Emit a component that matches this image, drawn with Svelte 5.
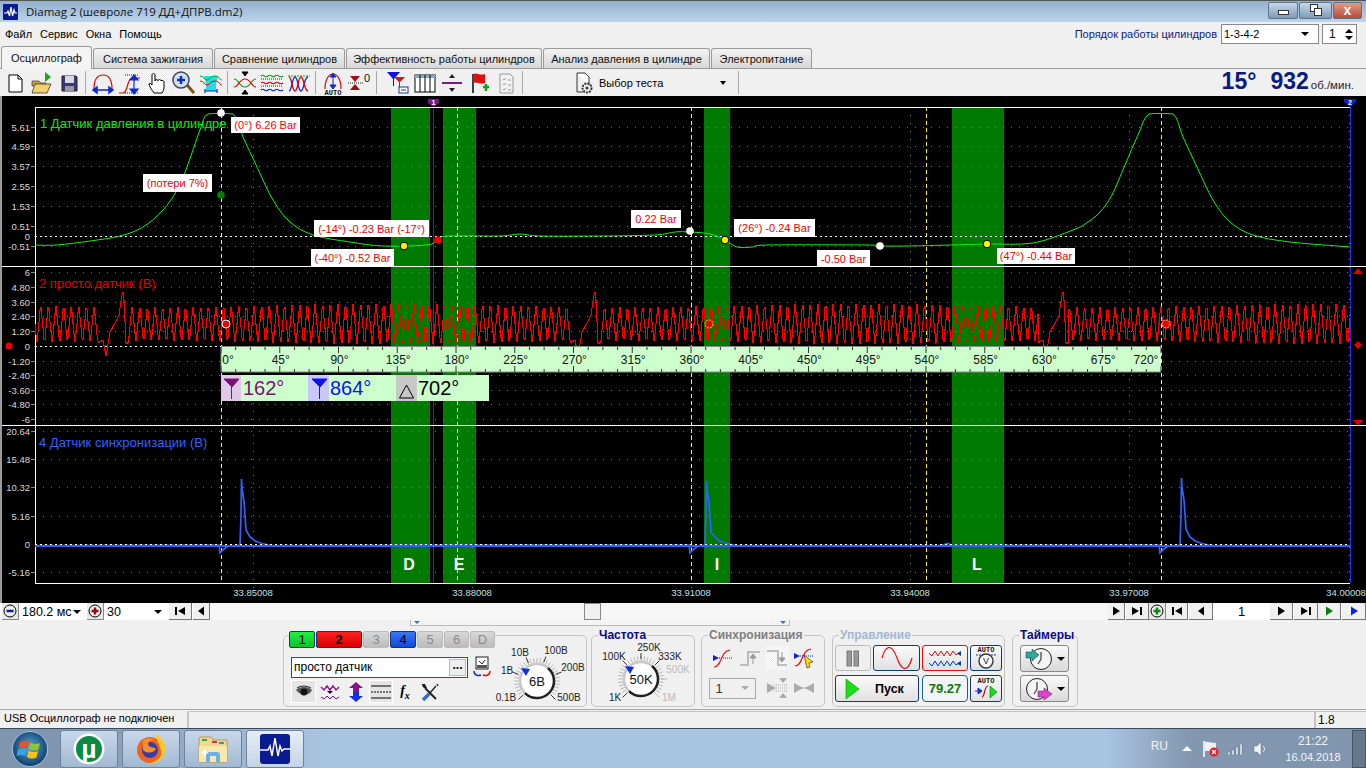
<script>
  const menus = ['Файл', 'Сервис', 'Окна', 'Помощь']
  const tabs = [
    ['Осциллограф', 91],
    ['Система зажигания', 120],
    ['Сравнение цилиндров', 131],
    ['Эффективность работы цилиндров', 196],
    ['Анализ давления в цилиндре', 167],
    ['Электропитание', 101]
  ]
  const channels = [
    ['1', 'green', 26], ['2', 'red', 46], ['3', 'off', 26], ['4', 'blue', 26],
    ['5', 'off', 26], ['6', 'off', 25], ['D', 'off', 25]
  ]

  // scope geometry
  const left = 35
  const right = 1350
  const bands = [[391, 39], [443, 33], [704, 26], [952, 52]]
  const cursors = [221, 457, 691, 926, 1161]
  const timeTicks = [[253, '33.85008', 253], [472, '33.88008', 472], [691, '33.91008', 691], [910, '33.94008', 910], [1129, '33.97008', 1129], [1349, '34.00008', 1346]]
  const axis = [
    [127, '5.61'], [146, '4.59'], [166, '3.57'], [186, '2.55'], [206, '1.53'], [226, '0.51'], [236, '0'], [246, '-0.51'],
    [272, '6'], [287, '4.80'], [302, '3.60'], [316, '2.40'], [331, '1.20'], [346, '0'], [361, '-1.20'], [375, '-2.40'], [390, '-3.60'], [404, '-4.80'], [419, '-6'],
    [431, '20.64'], [459, '15.48'], [487, '10.32'], [516, '5.16'], [544, '0'], [572, '-5.16']
  ]
  const gridRows = axis.filter((a) => a[1] !== '0').map((a) => a[0])
  const tags = [
    [231, 117, 69, 16, '(0°) 6.26 Bar'],
    [143, 174, 69, 18, '(потери 7%)'],
    [314, 220, 115, 17, '(-14°) -0.23 Bar (-17°)'],
    [311, 249, 83, 17, '(-40°) -0.52 Bar'],
    [631, 210, 50, 18, '0.22 Bar'],
    [734, 219, 81, 18, '(26°) -0.24 Bar'],
    [817, 250, 53, 17, '-0.50 Bar'],
    [997, 248, 78, 16, '(47°) -0.44 Bar']
  ]
  const dots = [
    [221, 113, '#fff'], [221, 195, '#0a7a0a'], [404, 246, '#ffee00'], [438, 240, '#f00000'],
    [690, 231, '#fff'], [725, 240, '#ffee00'], [880, 246, '#fff'], [987, 244, '#ffee00']
  ]

  const pressurePts = [
    [35, 245], [57, 245], [90, 241], [120, 236], [143, 227], [163, 210], [177, 190], [187, 167], [200, 130], [208, 114],
    [233, 114], [243, 137], [257, 167], [273, 200], [290, 222], [313, 235], [350, 242], [383, 246], [427, 245], [437, 240], [448, 236],
    [500, 236], [520, 234], [540, 236], [600, 236], [655, 235], [675, 232], [690, 232], [710, 234], [725, 240], [737, 247], [753, 247],
    [767, 245], [867, 245], [880, 246], [908, 246], [950, 245], [987, 244], [1033, 243], [1073, 230], [1088, 222], [1100, 212], [1112, 195],
    [1125, 165], [1138, 135], [1149, 114], [1173, 114], [1183, 137], [1197, 167], [1213, 200], [1230, 222], [1253, 235], [1290, 242], [1350, 247]
  ]

  // catmull-rom, so the curve doesn't show its knots
  function smooth(pts) {
    const out = []
    for (let i = 0; i < pts.length - 1; i++) {
      const a = pts[Math.max(i - 1, 0)]
      const b = pts[i]
      const c = pts[i + 1]
      const d = pts[Math.min(i + 2, pts.length - 1)]
      for (let s = 0; s < 4; s++) {
        const t = s / 4
        const f = (k) =>
          0.5 * (2 * b[k] + (c[k] - a[k]) * t + (2 * a[k] - 5 * b[k] + 4 * c[k] - d[k]) * t * t + (3 * b[k] - a[k] - 3 * c[k] + d[k]) * t * t * t)
        out.push(f(0).toFixed(1) + ',' + Math.max(113.5, f(1)).toFixed(1))
      }
    }
    out.push(pts[pts.length - 1].join(','))
    return out.join(' ')
  }
  const pressure = smooth(pressurePts)

  const bump = [[-25, 343], [-20, 340], [-17, 356], [-13, 332], [-8, 323], [-4, 315], [-1, 295], [0, 292], [1, 300], [3, 343], [6, 343]]

  function redY(x) {
    for (const p of [123, 595, 1063]) {
      const dx = x - p
      if (dx > -25 && dx < 6) {
        for (let i = 1; i < bump.length; i++) {
          if (dx <= bump[i][0]) {
            const t = (dx - bump[i - 1][0]) / (bump[i][0] - bump[i - 1][0])
            return bump[i - 1][1] + t * (bump[i][1] - bump[i - 1][1])
          }
        }
      }
    }
    const th = (2 * Math.PI * (x - 40.7)) / 7.62
    const amp = 16.5 - 1.6 * Math.sin((x - 35) / 75)
    return 324 - amp * (Math.cos(th) + 0.12 * Math.cos(3 * th))
  }
  let sensor = ''
  for (let x = left; x <= right; x += 1) sensor += x + ',' + redY(x).toFixed(1) + ' '

  function spike(dip, top, peak) {
    return [
      [dip - 1, 545], [dip, 553], [dip + 4, 549], [dip + 8, 546], [top - 1, 545], [top, 515], [top + 0.5, peak], [top + 1, peak + 9],
      [top + 2, peak + 16], [top + 3, peak + 22], [top + 4, peak + 36], [top + 5, peak + 51], [top + 9, 537], [top + 14, 541], [top + 21, 543.5], [top + 30, 545.5]
    ]
  }
  const sync = [[35, 545.5], ...spike(220, 241, 479), [940, 545.5], [948, 543.5], [952, 545.5], ...spike(690, 706, 481), ...spike(1160, 1181, 478), [1350, 545.5]]
    .sort((a, b) => a[0] - b[0])
    .map((p) => p.join(','))
    .join(' ')

  const scaleTicks = Array.from({ length: 65 }, (_, i) => ({ x: 221 + i * 14.6875, major: i % 4 === 0 }))
  const scaleLabels = Array.from({ length: 17 }, (_, i) => {
    let x = 221 + i * 58.75 + 1
    if (i === 0) x = 228
    if (i === 16) x = 1146
    return { x, text: i * 45 + '°' }
  })

  function polar(cx, cy, r, deg) {
    const a = ((deg - 90) * Math.PI) / 180
    return [cx + r * Math.cos(a), cy + r * Math.sin(a)]
  }
  function arc(cx, cy, r, from, to) {
    const a = polar(cx, cy, r, from)
    const b = polar(cx, cy, r, to)
    const big = to - from > 180 ? 1 : 0
    return `M${a[0]} ${a[1]}A${r} ${r} 0 ${big} 1 ${b[0]} ${b[1]}`
  }
  function tick(cx, cy, r1, r2, deg) {
    const a = polar(cx, cy, r1, deg)
    const b = polar(cx, cy, r2, deg)
    return `M${a[0]} ${a[1]}L${b[0]} ${b[1]}`
  }
  const fine = (step) => {
    const out = []
    for (let d = -135; d <= 135; d += step) out.push(d)
    return out
  }
</script>

{#snippet dial(cx, cy, value, step, r1, majors, labels)}
  {#each fine(step) as d}
    <path d={tick(cx, cy, r1 + 1, r1 + 6, d)} stroke="#b8b8b8" stroke-width="1" />
  {/each}
  <circle {cx} {cy} r={r1} fill="#fff" />
  <path d={arc(cx, cy, r1, -135, 40)} fill="none" stroke="#c8c8c8" stroke-width="2.5" />
  <path d={arc(cx, cy, r1, 40, 225)} fill="none" stroke="#202020" stroke-width="2.5" />
  {#each majors as m}
    <path d={tick(cx, cy, r1 + 3, r1 + 9, m[0])} stroke={m[1] ?? '#333'} stroke-width="1" />
  {/each}
  <polygon points="{cx - 16},{cy - 13} {cx - 7},{cy - 12} {cx - 11},{cy - 5}" fill="#1030e0" />
  <text x={cx} y={cy + 5} text-anchor="middle" class="dial-value">{value}</text>
  {#each labels as l}
    <text x={l[0]} y={l[1]} text-anchor="middle" class={l[3] ? 'dial-label dim' : 'dial-label'}>{l[2]}</text>
  {/each}
{/snippet}

{#snippet navBtn(width, kind, color, gap)}
  <button class="nav-btn" style="width:{width}px;margin-left:{gap ?? 0}px">
    <svg width="14" height="12" viewBox="0 0 14 12">
      {#if kind === 'first'}
        <path d="M2 2h2v8H2zM12 2v8L5 6z" fill={color} />
      {:else if kind === 'back'}
        <path d="M10 1.500v9L4 6z" fill={color} />
      {:else if kind === 'fwd'}
        <path d="M4 1.500v9l7-4.500z" fill={color} />
      {:else}
        <path d="M10 2h2v8h-2zM2 2v8l7-4z" fill={color} />
      {/if}
    </svg>
  </button>
{/snippet}

<div class="window">
  <header class="titlebar">
    <svg class="app-ico" width="15" height="16" viewBox="0 0 15 16">
      <rect width="15" height="16" rx="1" fill="#0a1a90" />
      <path d="M1 9h3l1-2 1.500 5L8 3l1.500 9L11 6l1 3h2" fill="none" stroke="#fff" stroke-width="1.200" />
    </svg>
    <span class="title">Diamag 2 (шевроле 719 ДД+ДПРВ.dm2)</span>
    <div class="win-btns">
      <span class="win-btn min"><i></i></span>
      <span class="win-btn restore"><i></i><b></b></span>
      <span class="win-btn close">x</span>
    </div>
  </header>

  <div class="menubar">
    {#each menus as m}<span>{m}</span>{/each}
    <span class="order-label">Порядок работы цилиндров</span>
    <div class="order-combo">1-3-4-2<em></em></div>
    <div class="order-spin">1<span class="spin"><em class="up"></em><em></em></span></div>
  </div>

  <nav class="tabs">
    {#each tabs as t, i}
      <span class="tab" class:active={i === 0} style="width:{t[1]}px">{t[0]}</span>
    {/each}
  </nav>

  <div class="toolbar">
    <button class="tb"><svg width="24" height="24" viewBox="0 0 24 24"><path d="M6 4h9l4 4v13H6z" fill="#fff" stroke="#000" /><path d="M15 4v4h4" fill="none" stroke="#000" /></svg></button>
    <button class="tb"><svg width="24" height="24" viewBox="0 0 24 24"><path d="M15 1l6 5-6 5z" fill="#1aa81a" /><path d="M2 10h7l2 2h5v3H2z" fill="#c8a030" stroke="#433" stroke-width=".7" /><path d="M2 22l3-9h16l-4 9z" fill="#f2cf70" stroke="#433" stroke-width=".8" /></svg></button>
    <button class="tb"><svg width="24" height="24" viewBox="0 0 24 24"><path d="M5 5h14l1 1v14H5z" fill="#3a3a70" stroke="#222" /><rect x="8" y="5" width="9" height="7" fill="#d8d8e8" /><rect x="8" y="15" width="9" height="5" fill="#9898a8" /></svg></button>
    <i class="sep"></i>
    <button class="tb"><svg width="26" height="24" viewBox="0 0 26 24"><path d="M4 18C4 8 8 4 13 4s9 4 9 14" fill="none" stroke="#e00000" stroke-width="1.200" /><path d="M3 19h20M7 16l-4 3 4 3zM19 16l4 3-4 3z" stroke="#0b2bd0" stroke-width="1.500" fill="#0b2bd0" /></svg></button>
    <button class="tb"><svg width="26" height="24" viewBox="0 0 26 24"><path d="M2 22h4c5 0 4-15 9-15h8" fill="none" stroke="#e00000" stroke-width="1.200" /><path d="M8 4h14M8 22h14" stroke="#222" stroke-dasharray="1 1" /><path d="M17 7v13M13 9l4-5 4 5zM13 18l4 5 4-5z" stroke="#0b2bd0" stroke-width="1.200" fill="#0b2bd0" /></svg></button>
    <button class="tb down"><svg width="24" height="24" viewBox="0 0 24 24"><path d="M9 22c-2-3-5-7-5-9 0-1 2-1 3 1V4c0-2 3-2 3 0v6c0-2 3-2 3 0 0-2 3-2 3 0 0-1 3-1 3 1v5c0 3-1 4-2 6z" fill="#fff" stroke="#000" /></svg></button>
    <button class="tb"><svg width="26" height="26" viewBox="0 0 26 26"><path d="M16 15l7 8" stroke="#7a5a10" stroke-width="3" /><circle cx="10" cy="10" r="8" fill="#cfe0f5" stroke="#445" stroke-width="1.500" /><path d="M10 6v8M6 10h8" stroke="#1030a0" stroke-width="2.500" /></svg></button>
    <button class="tb"><svg width="24" height="24" viewBox="0 0 24 24"><path d="M5 5h14l-2 8v7H7v-7z" fill="#1fe0e0" /><path d="M1 5c4 0 4 4 7 4s3-4 8-4 4 4 7 4" fill="none" stroke="#159a15" /><path d="M1 10c4 0 4 4 7 4s3-4 8-4 4 4 7 4" fill="none" stroke="#e00000" /><path d="M6 20h12M6 18v4M18 18v4" stroke="#0b2bd0" stroke-width="1.200" /></svg></button>
    <i class="sep"></i>
    <button class="tb"><svg width="24" height="24" viewBox="0 0 24 24"><path d="M1 8c5 0 5 8 11 8s6-8 11-8" fill="none" stroke="#159a15" stroke-width="1.200" /><path d="M1 16c5 0 5-8 11-8s6 8 11 8" fill="none" stroke="#e00000" stroke-width="1.200" /><path d="M12 5V1M9 1h6l-3 4zM12 19v4M9 23h6l-3-4z" fill="#000" stroke="#000" /></svg></button>
    <button class="tb down"><svg width="24" height="24" viewBox="0 0 24 24"><path d="M1 5c3-3 4 3 7 0s4 3 7 0 4 3 8 0" fill="none" stroke="#159a15" stroke-width="1.200" /><path d="M1 12c3-3 4 3 7 0s4 3 7 0 4 3 8 0" fill="none" stroke="#e00000" stroke-width="1.200" /><path d="M1 19c3-3 4 3 7 0s4 3 7 0 4 3 8 0" fill="none" stroke="#0b2bd0" stroke-width="1.200" /><path d="M1 8h22M1 15h22" stroke="#222" stroke-dasharray="1 1" /></svg></button>
    <button class="tb"><svg width="24" height="24" viewBox="0 0 24 24"><path d="M1 5h22" stroke="#159a15" stroke-dasharray="2 1" /><path d="M2 20C5 20 5 6 8 6s3 14 6 14 3-14 7-14" fill="none" stroke="#0b2bd0" stroke-width="1.300" /><path d="M2 6c3 0 3 14 6 14s3-14 6-14 3 14 7 14" fill="none" stroke="#e00000" stroke-width="1.300" /></svg></button>
    <i class="sep"></i>
    <button class="tb"><svg width="26" height="26" viewBox="0 0 26 26"><path d="M5 19C5 9 9 4 13 4s8 5 8 15" fill="none" stroke="#e00000" stroke-width="1.200" /><path d="M13 5v12M10 7l3-4 3 4zM10 15l3 4 3-4z" stroke="#0b2bd0" fill="#0b2bd0" /><text x="13" y="25" text-anchor="middle" class="auto">AUTO</text></svg></button>
    <button class="tb"><svg width="26" height="24" viewBox="0 0 26 24"><path d="M3 5h10l-5 6zM3 19h10l-5-6z" fill="#a01010" /><path d="M1 12h16" stroke="#222" stroke-dasharray="1 1" /><text x="20" y="11" text-anchor="middle" class="zero">0</text></svg></button>
    <i class="sep"></i>
    <button class="tb first-tool"><svg width="26" height="26" viewBox="0 0 26 26"><path d="M2 2h13L9 9v7H8V9z" fill="#1010e0" /><path d="M9 7h11l-5 5v5h-1v-5z" fill="#e01010" /><rect x="14" y="17" width="9" height="6" fill="#fff" stroke="#123a80" /><path d="M16 20h5" stroke="#123a80" /></svg></button>
    <button class="tb down"><svg width="24" height="24" viewBox="0 0 24 24"><rect x="2" y="4" width="20" height="17" fill="#fff" stroke="#000" /><rect x="2" y="4" width="20" height="3" fill="#8ba5cc" /><path d="M7 4v17M12 4v17M17 4v17" stroke="#000" /></svg></button>
    <button class="tb"><svg width="24" height="24" viewBox="0 0 24 24"><path d="M2 12h20" stroke="#7a1a8a" stroke-width="2" /><path d="M9 7h6l-3-4zM9 17h6l-3 4z" fill="#222" /></svg></button>
    <button class="tb"><svg width="24" height="24" viewBox="0 0 24 24"><path d="M6 3v19" stroke="#000" stroke-width="1.500" /><path d="M6 3c4-2 6 2 12 0v9c-6 2-8-2-12 0z" fill="#e01010" /><path d="M16 16h6M19 13v7" stroke="#10a010" stroke-width="2.500" /></svg></button>
    <button class="tb"><svg width="24" height="24" viewBox="0 0 24 24"><path d="M6 3h10l3 3v16H6z" fill="#f2f2f2" stroke="#999" /><path d="M9 8l1 1 2-2M9 13l1 1 2-2M9 18l1 1 2-2M14 9h3M14 14h3M14 19h3" fill="none" stroke="#999" /></svg></button>
    <i class="sep"></i>
    <div class="test-pick">
      <svg width="18" height="22" viewBox="0 0 18 22"><path d="M2 1h8l4 4v8" fill="#fff" stroke="#333" /><path d="M2 1v19h6" fill="none" stroke="#333" /><circle cx="12" cy="16" r="4.500" fill="none" stroke="#333" stroke-width="2" stroke-dasharray="2 1" /><circle cx="12" cy="16" r="1.500" fill="#333" /></svg>
      <span>Выбор теста</span>
      <em></em>
    </div>
    <i class="sep"></i>
    <div class="rpm"><b>15°</b><b class="rev">932</b><small>об./мин.</small></div>
  </div>

  <svg class="scope" width="1366" height="507" viewBox="0 96 1366 507">
    <rect x="0" y="96" width="1366" height="507" fill="#000" />
    <rect x="0" y="96" width="2" height="507" fill="#9a9a9a" />

    {#each bands as b}
      <rect x={b[0]} y="107" width={b[1]} height="476" fill="#007a00" />
    {/each}

    <g class="crisp">
      {#each gridRows as y}
        <line x1={left} x2={right} y1={y} y2={y} class="dots" />
        <line x1="31" x2={left} y1={y} y2={y} stroke="#888" />
      {/each}
      {#each timeTicks as t}
        <line x1={t[0]} x2={t[0]} y1="107" y2="588" class="dots" />
      {/each}
      {#each cursors as x}
        <line x1={x} x2={x} y1="107" y2="583" class="cursor" />
      {/each}
      <line x1="433" x2="433" y1="107" y2="583" stroke="#6a1a8a" />
      <line x1="1350" x2="1350" y1="107" y2="583" stroke="#2030f0" />
      <line x1={left} x2={right} y1="236" y2="236" class="zero-line" />
      <line x1={left} x2="221" y1="346" y2="346" class="zero-line" />
      <path d="M35 107H1350M35 107V583H1350M2 266H1366M2 425H1366" fill="none" stroke="#fff" />
    </g>

    <path d="M428 99h11v4l-5.500 4-5.500-4z" fill="#7a1a8a" />
    <text x="433.500" y="105" text-anchor="middle" class="flag">1</text>
    <path d="M1344 99h12v3l-6 5-6-5z" fill="#1020e0" />
    <text x="1350" y="105" text-anchor="middle" class="flag">2</text>

    {#each axis as a}
      <text x="30" y={a[0] + 3.500} text-anchor="end" class="axis">{a[1]}</text>
    {/each}
    {#each timeTicks as t}
      <text x={t[2]} y="596" text-anchor="middle" class="time">{t[1]}</text>
    {/each}

    <polyline points={pressure} fill="none" stroke="#10f010" />
    <polyline class="crisp" points={sensor} fill="none" stroke="#ff0000" stroke-width="1.050" stroke-linejoin="round" />
    <rect class="crisp" x={left} y="545" width={right - left} height="2" fill="#2f62ff" />
    <polyline points={sync} fill="none" stroke="#2f62ff" stroke-width="1.700" />
    <line class="crisp zero-line" x1={left} x2={right} y1="544" y2="544" />

    <text x="40" y="128" class="ch ch1">1 Датчик давления в цилиндре</text>
    <text x="39" y="288" class="ch ch2">2 просто датчик (В)</text>
    <text x="39" y="447" class="ch ch4">4 Датчик синхронизации (В)</text>

    {#each tags as t}
      <rect x={t[0]} y={t[1]} width={t[2]} height={t[3]} fill="#fff" />
      <text x={t[0] + t[2] / 2} y={t[1] + t[3] / 2 + 4} text-anchor="middle" class="tag">{t[4]}</text>
    {/each}

    {#each dots as d}
      <circle cx={d[0]} cy={d[1]} r="3.800" fill={d[2]} stroke={d[2] === '#ffee00' ? '#000' : 'none'} />
    {/each}

    <circle cx="226" cy="324" r="4" fill="#f00000" stroke="#fff" />
    <circle cx="709" cy="324" r="4" fill="#f00000" stroke="#ffe000" stroke-dasharray="2 1" />
    <circle cx="1166" cy="324" r="4" fill="#f00000" stroke="#ffe8a0" stroke-dasharray="2 1" />
    <circle cx="9" cy="346" r="3.500" fill="#f00000" />
    <path d="M1353 274l5-6 5 6zM1354 345l4-4 4 4-4 4zM1353 420l5 6 5-6z" fill="#e00000" />

    <rect x="221" y="347" width="940" height="25" fill="#ccffcc" />
    <path d="M221 346.500H1161M221 372H1161M221 347V372" stroke="#8a8a8a" fill="none" />
    {#each scaleTicks as s}
      <line x1={s.x} x2={s.x} y1="347" y2={s.major ? 353 : 350} stroke="#333" />
      <line x1={s.x} x2={s.x} y1={s.major ? 366 : 369} y2="372" stroke="#333" />
    {/each}
    {#each scaleLabels as l}
      <text x={l.x} y="364" text-anchor="middle" class="deg">{l.text}</text>
    {/each}

    <rect x="221" y="375" width="268" height="26" fill="#ccffcc" />
    <rect x="221" y="375" width="20" height="26" fill="#e2c8e8" />
    <rect x="308" y="375" width="21" height="26" fill="#c8c8ff" />
    <rect x="396" y="375" width="21" height="26" fill="#c8c8c8" />
    <path d="M224 379h15l-7 8zM231.500 385v14" fill="#7a107a" stroke="#7a107a" />
    <path d="M312 379h15l-7 8zM319.500 385v14" fill="#1010f0" stroke="#1010f0" />
    <path d="M406.500 385l7 13h-14z" fill="none" stroke="#000" />
    <text x="243" y="395" class="read r1">162°</text>
    <text x="330" y="395" class="read r2">864°</text>
    <text x="418" y="395" class="read r3">702°</text>

    <text x="409" y="570" text-anchor="middle" class="zone">D</text>
    <text x="459" y="570" text-anchor="middle" class="zone">E</text>
    <text x="717" y="570" text-anchor="middle" class="zone">I</text>
    <text x="977" y="570" text-anchor="middle" class="zone">L</text>
  </svg>

  <div class="navbar">
    <button class="round"><svg width="14" height="14" viewBox="0 0 14 14"><circle cx="7" cy="7" r="6" fill="#eee" stroke="#000" /><path d="M3.500 7h7" stroke="#102090" stroke-width="2.500" /></svg></button>
    <div class="nav-combo w68">180.2 мс<em></em></div>
    <button class="round"><svg width="14" height="14" viewBox="0 0 14 14"><circle cx="7" cy="7" r="6" fill="#eee" stroke="#000" /><path d="M3.500 7h7M7 3.500v7" stroke="#901010" stroke-width="2.500" /></svg></button>
    <div class="nav-combo w64">30<em></em></div>
    {@render navBtn(23, 'first', '#000', 1)}
    {@render navBtn(17, 'back', '#000', 1)}
    <div class="track"><span class="thumb"></span></div>
    {@render navBtn(17, 'fwd', '#000')}
    {@render navBtn(23, 'last', '#000', 1)}
    <button class="round g"><svg width="14" height="14" viewBox="0 0 14 14"><circle cx="7" cy="7" r="6" fill="#eee" stroke="#000" /><path d="M3.500 7h7M7 3.500v7" stroke="#0a8a0a" stroke-width="2.500" /></svg></button>
    {@render navBtn(22, 'first', '#000')}
    {@render navBtn(24, 'back', '#000', 1)}
    <span class="page">1</span>
    {@render navBtn(23, 'fwd', '#000')}
    {@render navBtn(24, 'last', '#000', 1)}
    {@render navBtn(23, 'fwd', '#0a7a0a')}
    {@render navBtn(24, 'fwd', '#0a20f0', 1)}
  </div>

  <div class="strip"><em></em><em></em></div>

  <section class="controls">
    <div class="group g1">
      <div class="g1-left">
        <div class="chan-row">
          {#each channels as c}
            <span class="chan {c[1]}" style="width:{c[2]}px">{c[0]}</span>
          {/each}
        </div>
        <div class="name-row">
          <div class="name">просто датчик<span class="dots-btn">...</span></div>
          <svg width="22" height="22" viewBox="0 0 22 22"><rect x="5" y="1" width="12" height="12" fill="#fff" stroke="#222" /><rect x="6" y="9" width="10" height="3" fill="#555" /><path d="M8 5l3 3M14 4l-3 4" stroke="#222" /><path d="M3 15c0 5 5 5 7 4" fill="none" stroke="#1030c0" stroke-width="1.400" /><path d="M19 15c0 5-5 5-7 4" fill="none" stroke="#e01010" stroke-width="1.400" /></svg>
        </div>
        <div class="ico-row">
          <button class="ci down"><svg width="18" height="14" viewBox="0 0 18 14"><path d="M1 5c4-4 12-4 16 0-2 6-12 6-16 0z" fill="#555" /><circle cx="9" cy="7" r="3.500" fill="#111" /><path d="M2 3c5-3 10-2 14 0" stroke="#111" fill="none" /></svg></button>
          <button class="ci"><svg width="20" height="20" viewBox="0 0 20 20"><path d="M1 5l3 3 3-4 3 4 3-4 3 4 3-3" fill="none" stroke="#8a108a" stroke-width="1.400" /><path d="M1 15l3 2 3-3 3 3 3-3 3 3 3-2" fill="none" stroke="#8a108a" /><path d="M7 9h6l-3 3z" fill="#111" /></svg></button>
          <button class="ci"><svg width="20" height="22" viewBox="0 0 20 22"><path d="M10 1L3 7h4v4h6V7h4z" fill="#8a108a" /><path d="M10 21l7-6h-4v-4H7v4H3z" fill="#1030e0" /></svg></button>
          <button class="ci down wide"><svg width="22" height="18" viewBox="0 0 22 18"><path d="M1 3h20M1 15h20" stroke="#000" stroke-width="1.200" /><path d="M1 9h20" stroke="#000" stroke-dasharray="2 1" /></svg></button>
          <button class="ci fx"><span>f<sub>x</sub></span></button>
          <button class="ci"><svg width="20" height="20" viewBox="0 0 20 20"><path d="M3 18l6-6" stroke="#3a6ac0" stroke-width="3.500" /><path d="M9 12l7-8M17 2l1 2" stroke="#222" stroke-width="1.400" /><path d="M5 6l11 11" stroke="#222" stroke-width="2" /><path d="M2 2c0 3 2 5 5 4l-1-2-1-2z" fill="#222" /></svg></button>
        </div>
      </div>
      <svg class="dial" width="89" height="62" viewBox="498 645 89 62">
        {@render dial(537, 681, '6В', 9, 17, [[-135], [-70], [-25], [20], [70], [135]], [[506, 701, '0.1В'], [507, 674, '1В'], [520, 656, '10В'], [556, 654, '100В'], [573, 671, '200В'], [569, 701, '500В']])}
      </svg>
    </div>

    <div class="group g2">
      <div class="legend navy">Частота</div>
      <svg class="dial" width="102" height="60" viewBox="592 646 102 60">
        {@render dial(641, 680, '50K', 9, 17, [[-135], [-45], [0], [45], [90, '#bbb'], [135, '#bbb']], [[615, 702, '1K'], [614, 661, '100K'], [649, 652, '250K'], [670, 661, '333K'], [678, 674, '500K', true], [669, 702, '1M', true]])}
      </svg>
    </div>

    <div class="group g3">
      <div class="legend grey">Синхронизация</div>
      <div class="sync-grid">
        <svg width="24" height="22" viewBox="0 0 24 22"><path d="M2 8l6 3-6 3z" fill="#1020e0" /><path d="M8 11h14" stroke="#1020e0" stroke-dasharray="1 1" /><path d="M3 20c8 0 6-16 16-17" fill="none" stroke="#e01010" stroke-width="1.200" /></svg>
        <svg width="24" height="22" viewBox="0 0 24 22"><path d="M2 18h8V5h12" fill="none" stroke="#aaa" stroke-width="1.500" /><path d="M15 17V9M12 11l3-4 3 4z" fill="#999" stroke="#999" /></svg>
        <svg class="chk" width="24" height="24" viewBox="0 0 24 24"><path d="M2 5h11v14h9" fill="none" stroke="#aaa" stroke-width="1.500" /><path d="M17 6v8M14 12l3 4 3-4z" fill="#999" stroke="#999" /></svg>
        <svg width="24" height="24" viewBox="0 0 24 24"><path d="M2 7l6 3-6 3z" fill="#1020e0" /><path d="M8 10h14" stroke="#1020e0" stroke-dasharray="1 1" /><path d="M3 20c8 0 6-16 16-17" fill="none" stroke="#e01010" stroke-width="1.200" /><path d="M12 9l9 7-4 1 1 4-3 1-1-4z" fill="#ffd800" stroke="#222" stroke-width=".6" /></svg>
        <div class="sync-combo">1<em></em></div>
        <span></span>
        <svg width="24" height="22" viewBox="0 0 24 22"><path d="M2 6l9 5-9 5zM14 1h8l-4 5zM14 21h8l-4-5z" fill="#aaa" /><path d="M9 8h13M9 11h13M9 14h13" stroke="#aaa" stroke-dasharray="1 1" /></svg>
        <svg width="24" height="22" viewBox="0 0 24 22"><path d="M2 6l9 5-9 5zM22 6l-9 5 9 5z" fill="#aaa" /><path d="M8 11h8" stroke="#aaa" /></svg>
      </div>
    </div>

    <div class="group g4">
      <div class="legend pale">Управление</div>
      <div class="ctl-grid">
        <button class="ctl off"><svg width="14" height="18" viewBox="0 0 14 18"><rect x="1" y="2" width="4.500" height="15" fill="#999" stroke="#777" /><rect x="8" y="2" width="4.500" height="15" fill="#999" stroke="#777" /></svg></button>
        <button class="ctl sine"><svg width="32" height="22" viewBox="0 0 32 22"><path d="M1 11C5-3 11-3 16 11s11 14 15 0" fill="none" stroke="#e01010" stroke-width="1.200" /></svg></button>
        <button class="ctl redb wave2"><svg width="34" height="20" viewBox="0 0 34 20"><path d="M1 5l3 3 3-5 3 5 3-5 3 5 3-5 3 5 3-5 3 4 3-2" fill="none" stroke="#e01010" /><path d="M1 15l3 3 3-5 3 5 3-5 3 5 3-5 3 5 3-5 3 4 3-2" fill="none" stroke="#1030e0" /><path d="M33 3v5l-4-2.500zM33 13v5l-4-2.500z" fill="#123a80" /></svg></button>
        <button class="ctl auto-btn"><svg width="24" height="24" viewBox="0 0 24 24"><text x="12" y="6" text-anchor="middle" class="auto">AUTO</text><path d="M2 9h20" stroke="#1030e0" stroke-width="1.200" stroke-dasharray="2 1" /><circle cx="12" cy="15" r="7" fill="#fff" stroke="#333" stroke-width="1.400" /><text x="12" y="18" text-anchor="middle" class="vee">V</text></svg></button>
        <button class="ctl start"><svg width="15" height="22" viewBox="0 0 15 22"><path d="M1 1l13 10L1 21z" fill="#18e018" stroke="#0a8a0a" stroke-width=".6" /></svg><b>Пуск</b></button>
        <div class="ctl value">79.27</div>
        <button class="ctl auto-btn"><svg width="24" height="24" viewBox="0 0 24 24"><text x="12" y="6" text-anchor="middle" class="auto">AUTO</text><path d="M1 14h7M4 11l4 3-4 3z" stroke="#1030e0" fill="#1030e0" /><path d="M8 20c3 0 2-11 6-11" fill="none" stroke="#a01010" stroke-width="1.200" /><path d="M16 9l7 6-7 6z" fill="#18e018" stroke="#0a6a0a" stroke-width=".6" /></svg></button>
      </div>
    </div>

    <div class="group g5">
      <div class="legend navy">Таймеры</div>
      <button class="timer">
        <svg width="30" height="24" viewBox="0 0 30 24"><circle cx="17" cy="12" r="10.500" fill="#f4f4f4" stroke="#222" /><path d="M17 5v7l-3 5" fill="none" stroke="#555" stroke-width="1.400" /><path d="M2 5h6V2l7 6-7 6v-3H2z" fill="#2aa8a0" stroke="#333" stroke-width=".5" /></svg>
        <em></em>
      </button>
      <button class="timer">
        <svg width="30" height="24" viewBox="0 0 30 24"><circle cx="13" cy="12" r="10.500" fill="#f4f4f4" stroke="#222" /><path d="M13 5v7l-3 5" fill="none" stroke="#555" stroke-width="1.400" /><path d="M14 14h6v-3l8 6-8 6v-3h-6z" fill="#e83ad0" stroke="#333" stroke-width=".5" /></svg>
        <em></em>
      </button>
    </div>
  </section>

  <footer class="status">
    <span class="st-main">USB Осциллограф не подключен</span>
    <span class="st-mid"></span>
    <span class="st-ver">1.8</span>
  </footer>

  <div class="taskbar">
    <div class="orb">
      <svg width="36" height="36" viewBox="0 0 36 36">
        <defs>
          <radialGradient id="orbfill" cx="50%" cy="45%" r="55%"><stop offset="0" stop-color="#5ca8d8" /><stop offset="1" stop-color="#0c3c68" /></radialGradient>
        </defs>
        <circle cx="18" cy="18" r="17.500" fill="url(#orbfill)" stroke="#d0e4f2" stroke-width=".7" />
        <path d="M8 11c3-2 6-2 9 0l-1.500 6.500c-3-1.500-6-1.500-9 0z" fill="#e8512a" />
        <path d="M18.500 11.500c3 2 6 2 9.500.5l-1.500 6.500c-3 1.500-6 1.500-9.500-.5z" fill="#8cc63f" />
        <path d="M6 18.500c3-1.500 6-1.500 9 0L13.500 25c-3-1.500-6-1.500-9 0z" fill="#35a4e8" />
        <path d="M16.500 19.500c3 2 6 2 9.500.5L24.500 26.500c-3 1.500-6 1.500-9.500-.5z" fill="#f8c21c" />
      </svg>
    </div>
    <div class="task">
      <svg width="32" height="32" viewBox="0 0 32 32"><circle cx="16" cy="16" r="15.500" fill="#fff" /><circle cx="16" cy="16" r="13" fill="#0a8a42" /><text x="16" y="25" text-anchor="middle" class="mu">µ</text></svg>
    </div>
    <div class="task">
      <svg width="32" height="32" viewBox="0 0 32 32"><circle cx="15" cy="17" r="13" fill="#f0641e" /><path d="M21 1c6 4 10 10 9 17-1 8-8 13-15 12 8-2 12-6 11-12-1-7-5-11-5-17z" fill="#ffc81e" /><circle cx="15" cy="17" r="8" fill="#3a3aa8" /><path d="M8 8c4-4 9-3 11-1-5 0-7 3-5 6 2 2 6 1 7 3-2 4-9 5-13 1z" fill="#f8902a" /></svg>
    </div>
    <div class="task">
      <svg width="32" height="30" viewBox="0 0 32 30"><path d="M2 6l1-3h11l2 3h14v22H2z" fill="#f0d890" stroke="#b89a50" /><rect x="5" y="5" width="5" height="2" fill="#3aa83a" /><rect x="15" y="7" width="5" height="2" fill="#c83a3a" /><rect x="22" y="8" width="5" height="2" fill="#3a8ae0" /><path d="M2 12h28v16H2z" fill="#f8e8b0" /><path d="M9 28v-7c0-2 1-3 3-3h8c2 0 3 1 3 3v7h-4v-6h-6v6z" fill="#6ab0e8" /><path d="M6 18l2-3 1 3 3 1-3 1-1 3-1-3-3-1z" fill="#fff" /></svg>
    </div>
    <div class="task active">
      <svg width="32" height="32" viewBox="0 0 32 32"><rect x="1" y="1" width="30" height="30" rx="3" fill="#0a1a90" /><path d="M1 17h8l2-4 2 10 3-18 3 18 2-10 2 5 2-2h6" fill="none" stroke="#fff" stroke-width="1.500" /></svg>
    </div>
    <div class="tray">
      <span class="lang">RU</span>
      <svg width="12" height="8" viewBox="0 0 12 8"><path d="M1 6l5-5 5 5z" fill="#f2f6fa" /></svg>
      <svg class="flag-ico" width="18" height="18" viewBox="0 0 18 18"><path d="M2 1v16" stroke="#fff" stroke-width="1.500" /><path d="M3 2c3-1 5 1 11 1v9c-6 0-8-2-11-1z" fill="#eef2f6" /><circle cx="12" cy="12" r="4.500" fill="#e02020" /><path d="M10 10l4 4M14 10l-4 4" stroke="#fff" stroke-width="1.200" /></svg>
      <svg class="bars" width="16" height="14" viewBox="0 0 16 14"><path d="M1 10h2v3H1zM5 8h2v5H5zM9 5h2v8H9zM13 2h2v11h-2z" fill="#f2f6fa" stroke="#4a5a6a" stroke-width=".4" /></svg>
      <svg class="spk" width="14" height="16" viewBox="0 0 14 16"><path d="M1 5h3l4-4v14l-4-4H1z" fill="#eef2f6" stroke="#4a5a6a" stroke-width=".4" /><path d="M10 5c2 2 2 4 0 6" fill="none" stroke="#eef2f6" /></svg>
      <div class="clock"><span>21:22</span><span>16.04.2018</span></div>
      <i class="desktop"></i>
    </div>
  </div>
</div>

<style>
  :global(body) {
    margin: 0;
    background: #f0f0f0;
  }

  .window {
    width: 1366px;
    height: 768px;
    overflow: hidden;
    display: flex;
    flex-direction: column;
    font-family: 'Liberation Sans', Arial, sans-serif;
    font-size: 12px;
    color: #000;
    background: #f0f0f0;
  }

  button {
    padding: 0;
    margin: 0;
    font-family: inherit;
    display: flex;
    align-items: center;
    justify-content: center;
    box-sizing: border-box;
  }

  em {
    display: inline-block;
    width: 0;
    height: 0;
    border-left: 4px solid transparent;
    border-right: 4px solid transparent;
    border-top: 4px solid #000;
  }

  .titlebar {
    height: 22px;
    flex: none;
    display: flex;
    align-items: center;
    box-sizing: border-box;
    border-top: 1px solid #555;
    padding-left: 3px;
    background: linear-gradient(#96b0cc, #bcd4ea);
  }
  .app-ico {
    margin-right: 8px;
  }
  .title {
    font-family: 'Open Sans', sans-serif;
    font-size: 11.500px;
    color: #111;
  }
  .win-btns {
    margin-left: auto;
    margin-right: 4px;
    margin-top: -3px;
    display: flex;
    gap: 1px;
  }
  .win-btn {
    height: 17px;
    box-sizing: border-box;
    border: 1px solid #5f7286;
    border-radius: 2px;
    background: linear-gradient(#c6d8ea, #7f9ab6);
    display: flex;
    align-items: center;
    justify-content: center;
    position: relative;
  }
  .min {
    width: 30px;
  }
  .min i {
    width: 9px;
    height: 3px;
    margin-top: 5px;
    background: #fff;
    border: 1px solid #333;
  }
  .restore {
    width: 33px;
  }
  .restore i,
  .restore b {
    width: 6px;
    height: 6px;
    border: 1px solid #333;
    background: #fff;
  }
  .restore i {
    margin: -4px -4px 0 0;
  }
  .restore b {
    margin: 4px 0 0 0;
  }
  .close {
    width: 29px;
    background: linear-gradient(#e09a88, #b84a38);
    color: #fff;
    font-weight: bold;
    font-size: 14px;
    line-height: 12px;
  }

  .menubar {
    height: 24px;
    flex: none;
    display: flex;
    align-items: center;
    padding: 0 9px 0 5px;
    gap: 8px;
    font-size: 11px;
  }
  .order-label {
    margin-left: auto;
    color: #0c1c84;
    font-size: 11px;
    margin-right: -4px;
  }
  .order-combo {
    width: 98px;
    height: 20px;
    box-sizing: border-box;
    background: #fff;
    border: 1px solid #888;
    display: flex;
    align-items: center;
    justify-content: space-between;
    padding: 0 9px 0 2px;
    font-size: 11px;
  }
  .order-spin {
    width: 35px;
    height: 20px;
    box-sizing: border-box;
    background: #fff;
    border: 1px solid #888;
    display: flex;
    align-items: center;
    justify-content: space-between;
    padding: 0 3px 0 6px;
    margin-left: -5px;
    font-size: 12px;
  }
  .spin {
    display: flex;
    flex-direction: column;
    gap: 3px;
  }
  .spin .up {
    border-top: 0;
    border-bottom: 4px solid #000;
  }

  .tabs {
    height: 22px;
    flex: none;
    display: flex;
    align-items: flex-end;
    padding-left: 1px;
    gap: 1px;
  }
  .tab {
    height: 20px;
    box-sizing: border-box;
    border: 1px solid #9a9a9a;
    border-bottom: 0;
    border-radius: 3px 3px 0 0;
    background: linear-gradient(#f2f2f2, #d8d8d8);
    display: flex;
    align-items: center;
    justify-content: center;
    font-size: 11px;
    color: #111;
  }
  .tab.active {
    height: 23px;
    background: #f4f4f4;
    margin-bottom: -1px;
    position: relative;
    z-index: 1;
  }

  .toolbar {
    height: 28px;
    flex: none;
    box-sizing: border-box;
    border-top: 1px solid #9a9a9a;
    display: flex;
    align-items: center;
    padding-left: 1px;
  }
  .tb {
    width: 27px;
    height: 27px;
    border: 0;
    background: transparent;
  }
  .tb.down {
    background: repeating-conic-gradient(#fff 0 25%, #e8e8e8 0 50%) 0 0 / 2px 2px;
  }
  .first-tool {
    margin-left: 4px;
  }
  .sep {
    width: 1px;
    height: 23px;
    margin: 0 3px 0 3px;
    background: #a8a8a8;
  }
  .test-pick {
    width: 212px;
    margin-right: -3px;
    display: flex;
    align-items: center;
    padding-left: 49px;
    box-sizing: border-box;
    gap: 6px;
    font-size: 11px;
  }
  .test-pick em {
    margin-left: 51px;
    border-left-width: 3px;
    border-right-width: 3px;
  }
  .rpm {
    margin-left: auto;
    margin-right: 12px;
    display: flex;
    align-items: baseline;
    color: #0a1a80;
    font-size: 23px;
    line-height: 26px;
  }
  .rev {
    margin-left: 14px;
  }
  .rpm small {
    font-size: 11.500px;
    margin-left: 2px;
    color: #223;
  }

  .scope {
    display: block;
    flex: none;
  }
  .crisp {
    shape-rendering: crispEdges;
  }
  .dots {
    stroke: #777;
    stroke-dasharray: 1 7;
  }
  .cursor {
    stroke: #ffee44;
    stroke-dasharray: 4 3;
  }
  .zero-line {
    stroke: #fff;
    stroke-dasharray: 2 3;
  }
  .axis {
    font-size: 9.500px;
    fill: #d8d8d8;
  }
  .time {
    font-size: 9.500px;
    fill: #bfe0e0;
  }
  .flag {
    font-size: 7px;
    font-weight: bold;
    fill: #fff;
  }
  .ch {
    font-size: 13px;
  }
  .ch1 {
    fill: #10e810;
  }
  .ch2 {
    fill: #e00000;
  }
  .ch4 {
    fill: #2f62ff;
  }
  .tag {
    font-size: 11px;
    fill: #f00000;
  }
  .deg {
    font-size: 12px;
    fill: #111;
  }
  .read {
    font-size: 20px;
  }
  .r1 {
    fill: #7a107a;
  }
  .r2 {
    fill: #1010f0;
  }
  .r3 {
    fill: #000;
  }
  .zone {
    font-size: 16px;
    font-weight: bold;
    fill: #fff;
  }

  .navbar {
    height: 17px;
    flex: none;
    display: flex;
    padding-left: 2px;
    background: #fff;
  }
  .round {
    width: 17px;
    height: 17px;
    border: 0;
    border-right: 1px solid #888;
    border-bottom: 1px solid #888;
    background: #e8e8e8;
  }
  .nav-btn {
    height: 17px;
    border: 0;
    border-right: 1px solid #777;
    border-bottom: 1px solid #777;
    background: #f0f0f0;
  }
  .nav-combo {
    height: 17px;
    box-sizing: border-box;
    display: flex;
    align-items: center;
    justify-content: space-between;
    padding: 0 6px 0 3px;
    font-size: 12.500px;
  }
  .w68 {
    width: 68px;
  }
  .w64 {
    width: 64px;
  }
  .track {
    flex: 1;
    position: relative;
    background: repeating-conic-gradient(#fff 0 25%, #efefef 0 50%) 0 0 / 2px 2px;
  }
  .thumb {
    position: absolute;
    left: 374px;
    top: 0;
    width: 17px;
    height: 17px;
    box-sizing: border-box;
    background: #f0f0f0;
    border: 1px solid #888;
  }
  .page {
    width: 57px;
    text-align: center;
    font-size: 13px;
    line-height: 17px;
    background: #fff;
  }

  .strip {
    width: 380px;
    height: 6px;
    flex: none;
    margin-left: 410px;
    padding: 1px 3px 0;
    box-sizing: border-box;
    border: 1px solid #bbb;
    border-top: 0;
    background: #f4f4f4;
    display: flex;
    justify-content: space-between;
    align-items: flex-start;
  }
  .strip em {
    border-left-width: 3px;
    border-right-width: 3px;
    border-top: 3px solid #3a70d8;
  }

  .controls {
    height: 84px;
    flex: none;
    box-sizing: border-box;
    padding: 9px 0 0 283px;
    display: flex;
    align-items: flex-start;
    border-bottom: 1px solid #a8a8a8;
  }
  .group {
    height: 72px;
    flex: none;
    box-sizing: border-box;
    border: 1px solid #c4c4c4;
    border-radius: 5px;
  }
  .g1 {
    width: 304px;
    display: flex;
  }
  .g2 {
    width: 104px;
    margin-left: 4px;
  }
  .g3 {
    width: 124px;
    margin-left: 6px;
  }
  .g4 {
    width: 173px;
    margin-left: 7px;
  }
  .g5 {
    width: 66px;
    margin-left: 7px;
  }
  .legend {
    width: fit-content;
    margin: -8px 0 0 6px;
    padding: 0 1px;
    background: #f0f0f0;
    font-size: 12px;
    font-weight: bold;
    line-height: 15px;
  }
  .navy {
    color: #0a0a80;
  }
  .grey {
    color: #808080;
  }
  .pale {
    color: #a0b8d4;
  }

  .g1-left {
    width: 214px;
    flex: none;
    padding-left: 5px;
    box-sizing: border-box;
  }
  .chan-row {
    display: flex;
    gap: 1px;
    margin-top: -5px;
    position: relative;
  }
  .chan {
    height: 17px;
    box-sizing: border-box;
    border: 1px solid #123a66;
    border-radius: 2px;
    display: flex;
    align-items: center;
    justify-content: center;
    font-size: 13px;
  }
  .chan.green {
    background: linear-gradient(#20f040, #10c030);
  }
  .chan.red {
    background: linear-gradient(#ff2020, #d80000);
    font-weight: bold;
  }
  .chan.blue {
    background: linear-gradient(#3a78f8, #1048d8);
  }
  .chan.off {
    background: linear-gradient(#d8d8d8, #bcbcbc);
    color: #8a8a8a;
  }
  .name-row {
    display: flex;
    align-items: center;
    margin-top: 8px;
    gap: 3px;
  }
  .name {
    width: 177px;
    height: 21px;
    margin-left: 2px;
    box-sizing: border-box;
    border: 1px solid #d01010;
    background: #fff;
    display: flex;
    align-items: center;
    justify-content: space-between;
    padding-left: 2px;
    font-size: 12px;
  }
  .dots-btn {
    width: 17px;
    height: 17px;
    margin-right: 1px;
    box-sizing: border-box;
    border: 1px solid #bbb;
    background: #eee;
    font-weight: bold;
    text-align: center;
    line-height: 11px;
  }
  .ico-row {
    display: flex;
    align-items: center;
    margin-top: 2px;
    margin-left: 2px;
    gap: 1px;
  }
  .ci {
    width: 25px;
    height: 23px;
    border: 0;
    background: transparent;
  }
  .ci.down {
    border: 1px solid #fff;
    background: #e4e4e4;
  }
  .ci.wide {
    width: 24px;
  }
  .fx {
    width: 22px;
    font-family: 'Liberation Serif', serif;
    font-style: italic;
    font-weight: bold;
    font-size: 14px;
  }
  .fx sub {
    font-size: 10px;
  }
  .dial {
    display: block;
    flex: none;
    margin-top: 9px;
    overflow: visible;
  }
  .g2 .dial {
    margin-top: 2px;
  }
  .dial-value {
    font-size: 13px;
    fill: #111;
  }
  .dial-label {
    font-size: 10px;
    fill: #222;
  }
  .dial-label.dim {
    fill: #b8b8b8;
  }

  .sync-grid {
    display: grid;
    grid-template-columns: repeat(4, 27px);
    grid-auto-rows: 30px;
    align-items: center;
    justify-items: center;
    padding: 0 0 0 7px;
  }
  .chk {
    background: repeating-conic-gradient(#fff 0 25%, #ececec 0 50%) 0 0 / 2px 2px;
  }
  .sync-combo {
    grid-column: span 1;
    width: 47px;
    height: 21px;
    box-sizing: border-box;
    margin-left: 19px;
    border: 1px solid #aaa;
    background: #f0f0f0;
    display: flex;
    align-items: center;
    justify-content: space-between;
    padding: 0 6px;
    font-size: 13px;
    color: #333;
  }
  .sync-combo em {
    border-top-color: #aaa;
  }

  .ctl-grid {
    display: grid;
    grid-template-columns: 36px 47px 46px 32px;
    grid-template-rows: 26px 27px;
    gap: 4px 2px;
    padding: 2px 0 0 2px;
  }
  .ctl {
    box-sizing: border-box;
    border: 1px solid #123a66;
    border-radius: 3px;
    background: linear-gradient(#fafafa, #e0e0e0);
  }
  .off {
    border-color: #bbb;
    background: #efefef;
  }
  .redb {
    border-color: #e01010;
  }
  .start {
    grid-column: span 2;
    justify-content: flex-start;
    padding-left: 9px;
    width: 84px;
  }
  .start b {
    margin-left: 15px;
    font-size: 12.500px;
  }
  .value {
    background: #f4f4f4;
    border-color: #1a5ea0;
    border-radius: 4px;
    color: #0a7a0a;
    font-weight: bold;
    font-size: 13px;
    display: flex;
    align-items: center;
    justify-content: center;
  }
  .auto {
    font-family: 'Liberation Mono', monospace;
    font-size: 7px;
    font-weight: bold;
    fill: #111;
  }
  .zero {
    font-size: 11px;
    fill: #111;
  }
  .vee {
    font-size: 9px;
    fill: #111;
  }

  .timer {
    width: 49px;
    height: 27px;
    margin: 2px 0 3px 7px;
    border: 1px solid #888;
    border-radius: 3px;
    background: linear-gradient(#fafafa, #d8d8d8);
    gap: 3px;
    justify-content: flex-start;
    padding-left: 3px;
  }

  .status {
    height: 18px;
    flex: none;
    display: flex;
    box-sizing: border-box;
    padding-top: 1px;
    background: #f0f0f0;
  }
  .st-main {
    width: 189px;
    padding-left: 4px;
    box-sizing: border-box;
    font-size: 11px;
    line-height: 15px;
    border-right: 2px solid #c4c4c4;
  }
  .st-mid {
    width: 1126px;
    margin-left: 1px;
    border-top: 1px solid #c4c4c4;
    border-right: 2px solid #c4c4c4;
    box-sizing: border-box;
  }
  .st-ver {
    padding-left: 2px;
    font-size: 12px;
    line-height: 16px;
    border-top: 1px solid #c4c4c4;
    flex: 1;
  }

  .taskbar {
    height: 40px;
    flex: none;
    display: flex;
    align-items: stretch;
    box-sizing: border-box;
    border-top: 1px solid #39495c;
    background: linear-gradient(90deg, #8096ae 0, #8096ae 4%, #a9c4e0 24%, #a9c4e0 81%, #8398b0 87%, #8096ae 100%);
  }
  .orb {
    width: 60px;
    display: flex;
    align-items: center;
    justify-content: center;
    margin-left: -6px;
    padding-left: 6px;
  }
  .task {
    width: 58px;
    margin-right: 4px;
    margin-top: 1px;
    border: 1px solid #6f8398;
    border-radius: 3px;
    box-sizing: border-box;
    background: linear-gradient(#c8d8ea, #a2b8d2);
    display: flex;
    align-items: center;
    justify-content: center;
  }
  .task.active {
    background: linear-gradient(#e6eef6, #c4d4e6);
  }
  .mu {
    font-size: 26px;
    font-weight: bold;
    fill: #fff;
  }
  .tray {
    margin-left: auto;
    display: flex;
    align-items: center;
    color: #f0f4f8;
    font-size: 12px;
  }
  .lang {
    margin-right: 13px;
    margin-top: -6px;
  }
  .flag-ico {
    margin-left: 9px;
  }
  .bars {
    margin-left: 7px;
  }
  .spk {
    margin-left: 10px;
  }
  .clock {
    width: 72px;
    margin-left: 10px;
    display: flex;
    flex-direction: column;
    align-items: center;
    line-height: 16px;
    font-size: 11px;
  }
  .clock span:first-child {
    font-size: 12px;
  }
  .desktop {
    width: 14px;
    height: 38px;
    margin-left: 3px;
    box-sizing: border-box;
    border: 1px solid #46566a;
    background: #66788c;
  }
</style>
